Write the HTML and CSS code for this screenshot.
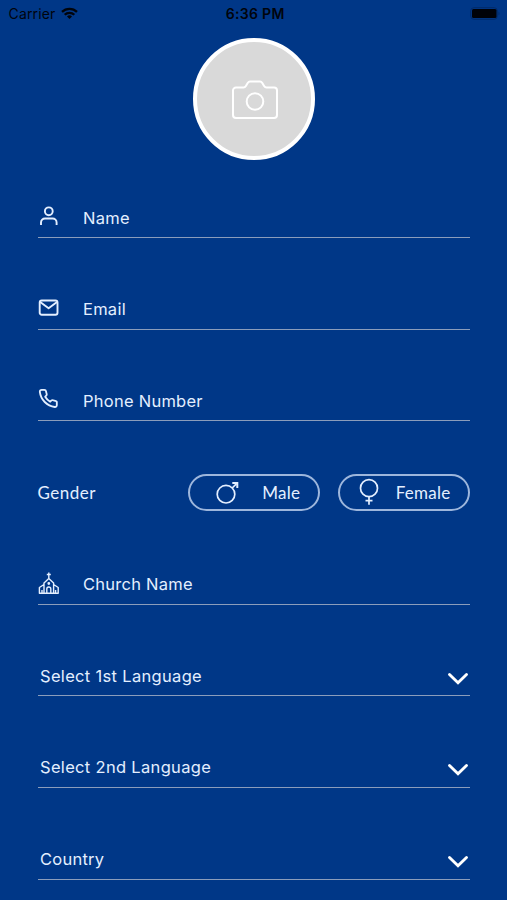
FILE: index.html
```html
<!DOCTYPE html>
<html lang="en">
<head>
<meta charset="utf-8">
<title>Profile</title>
<link rel="stylesheet" href="styles.css">
</head>
<body>
<header class="status">
  <div class="carrier"><span>Carrier</span>
    <svg width="17" height="13" viewBox="0 0 17 13" fill="none" stroke="#00040c" stroke-width="2.3"><path d="M1 4.9a10.7 10.7 0 0 1 15 0M3.7 7.8a6.8 6.8 0 0 1 9.6 0"/><path d="M8.5 12 6 9.5a3.6 3.6 0 0 1 5 0z" fill="#00040c" stroke="none"/></svg>
  </div>
  <div class="time">6:36 PM</div>
  <svg class="battery" width="30" height="13" viewBox="0 0 30 13"><rect x=".7" y=".7" width="26.6" height="11.6" rx="3.2" fill="none" stroke="#002b69"/><rect x="2" y="2" width="24.5" height="9" rx="1.5" fill="#000208"/><path d="M28.5 4.5c1.3.5 1.3 3.5 0 4z" fill="#002b69"/></svg>
</header>
<main>
  <div class="avatar">
    <svg width="46" height="39" viewBox="0 0 46 39" fill="none" stroke="#fff" stroke-width="2" stroke-linejoin="round"><path d="M4 7.5h7.5c1.2 0 1.8-.6 2.4-1.6l1.8-3c.6-1 1.2-1.5 2.3-1.5h10c1.1 0 1.7.5 2.3 1.5l1.8 3c.6 1 1.2 1.6 2.4 1.6H42a3 3 0 0 1 3 3V35a3 3 0 0 1-3 3H4a3 3 0 0 1-3-3V10.5a3 3 0 0 1 3-3z"/><circle cx="23" cy="21.5" r="8.3"/></svg>
  </div>
  <form class="form">
    <div class="field">
      <svg class="icon" width="22" height="24" viewBox="0 0 22 24"><circle cx="10.800" cy="7.300" r="3.900"/><path d="M3 21v-2.500a4 4 0 0 1 4-4h7.600a4 4 0 0 1 4 4V21"/></svg>
      <span class="label name">Name</span>
    </div>
    <div class="field">
      <svg class="icon" width="22" height="24" viewBox="0 0 22 24"><rect x="1.700" y="4.500" width="17.800" height="14.200" rx="2"/><path d="m2.200 5.900 8.400 6.300L19 5.900"/></svg>
      <span class="label email">Email</span>
    </div>
    <div class="field">
      <svg class="icon" width="22" height="24" viewBox="0 0 22 24"><g transform="translate(0 .1) scale(.96)"><path d="M19.600 16.500v2.300a1.900 1.900 0 0 1-2.100 1.900A18 18 0 0 1 1.900 5a1.900 1.900 0 0 1 1.900-2.100h2.700a1.900 1.900 0 0 1 1.900 1.600c.1.900.3 1.600.6 2.400a1.900 1.900 0 0 1-.4 2L7.500 10a14 14 0 0 0 5.200 5.200l1.100-1.100a1.900 1.900 0 0 1 2-.4c.7.300 1.500.5 2.300.6a1.900 1.900 0 0 1 1.500 2.200z"/></g></svg>
      <span class="label phone">Phone Number</span>
    </div>
    <div class="gender">
      <span class="gender-title">Gender</span>
      <button type="button" class="pill male">
        <svg width="26" height="28" viewBox="0 0 26 28"><circle cx="11" cy="16.2" r="8.800"/><path d="m17.200 10 4.200-4.200"/><path d="M17.300 5h5v5" stroke-width="2"/></svg><span>Male</span>
      </button>
      <button type="button" class="pill female">
        <svg width="22" height="28" viewBox="0 0 22 28"><circle cx="11" cy="10.200" r="8.500"/><path d="M11 18.700v8M7.500 22.700h7"/></svg><span>Female</span>
      </button>
    </div>
    <div class="field">
      <svg class="icon church" width="22" height="24" viewBox="0 0 22 24"><path d="M10.800 1.500v6M8.800 3.500h4M6 22V12l4.800-4.500 4.800 4.500v10M6 13.500l-4.600 3v5.800h18.800v-5.800l-4.600-3M8.800 22v-4a2 2 0 0 1 4 0v4M4 22v-3M17.600 22v-3"/><circle cx="10.800" cy="12.500" r=".7"/></svg>
      <span class="label churchname">Church Name</span>
    </div>
    <div class="field select"><span class="label first">Select 1st Language</span><svg class="chevron" width="22" height="14" viewBox="0 0 22 14"><path d="m2.500 2.500 8.500 8.300 8.500-8.300"/></svg></div>
    <div class="field select"><span class="label second">Select 2nd Language</span><svg class="chevron" width="22" height="14" viewBox="0 0 22 14"><path d="m2.500 2.500 8.500 8.300 8.500-8.300"/></svg></div>
    <div class="field select"><span class="label country">Country</span><svg class="chevron" width="22" height="14" viewBox="0 0 22 14"><path d="m2.500 2.500 8.500 8.300 8.500-8.300"/></svg></div>
  </form>
</main>
</body>
</html>
```
FILE: styles.css
```css
* { box-sizing: border-box; }
body {
  margin: 0;
  height: 900px;
  overflow: hidden;
  background: #003787;
  color: #e4efff;
  font-family: Inter, "Liberation Sans", sans-serif;
}
svg { display: block; flex: none; }
.status {
  height: 26px;
  padding: 0 7px 0 8.5px;
  display: grid;
  grid-template-columns: 1fr auto 1fr;
  align-items: center;
  color: #00040c;
  font-size: 14px;
}
.carrier { display: flex; align-items: center; gap: 6px; letter-spacing: .15px; }
.time { font-weight: 600; letter-spacing: .3px; padding-left: 2px; }
.battery { justify-self: end; }
.avatar {
  width: 122px;
  height: 122px;
  margin: 12px 0 0 193px;
  border: 4px solid #fff;
  border-radius: 50%;
  background: #d9d9d9;
  display: flex;
  align-items: center;
  justify-content: center;
  padding-left: 2px;
}
.form {
  margin: 32px 37px 0 37.5px;
  display: flex;
  flex-direction: column;
  gap: 45.66px;
}
.field {
  height: 46px;
  border-bottom: 1px solid #8b9dbb;
  display: flex;
  align-items: center;
}
.icon { margin: 3px 23.5px 0 0; fill: none; stroke: #e4efff; stroke-width: 1.9; stroke-linejoin: round; }
.church { stroke-width: 1.4; }
.label { font-size: 16.5px; line-height: 24px; margin-top: 6px; white-space: nowrap; letter-spacing: .25px; }
.first, .second { letter-spacing: .32px; }
.select { padding: 0 1px 0 2.5px; justify-content: space-between; }
.chevron { margin-top: 12px; fill: none; stroke: #fff; stroke-width: 2.9; stroke-linecap: round; }
.gender { height: 46px; display: flex; align-items: center; font-family: Lato, sans-serif; font-size: 17px; padding-top: 5px; }
.gender-title { width: 150.5px; letter-spacing: .5px; }
.pill {
  width: 132.5px;
  height: 37px;
  padding: 0;
  border: 2px solid #9db6dc;
  border-radius: 19px;
  background: none;
  color: #e4efff;
  font: inherit;
  letter-spacing: .25px;
  display: flex;
  align-items: center;
}
.pill svg { fill: none; stroke: #e4efff; stroke-width: 1.7; }
.male { padding-left: 25.5px; gap: 21px; }
.female { margin-left: 17.5px; padding-left: 18px; gap: 16px; }
```
